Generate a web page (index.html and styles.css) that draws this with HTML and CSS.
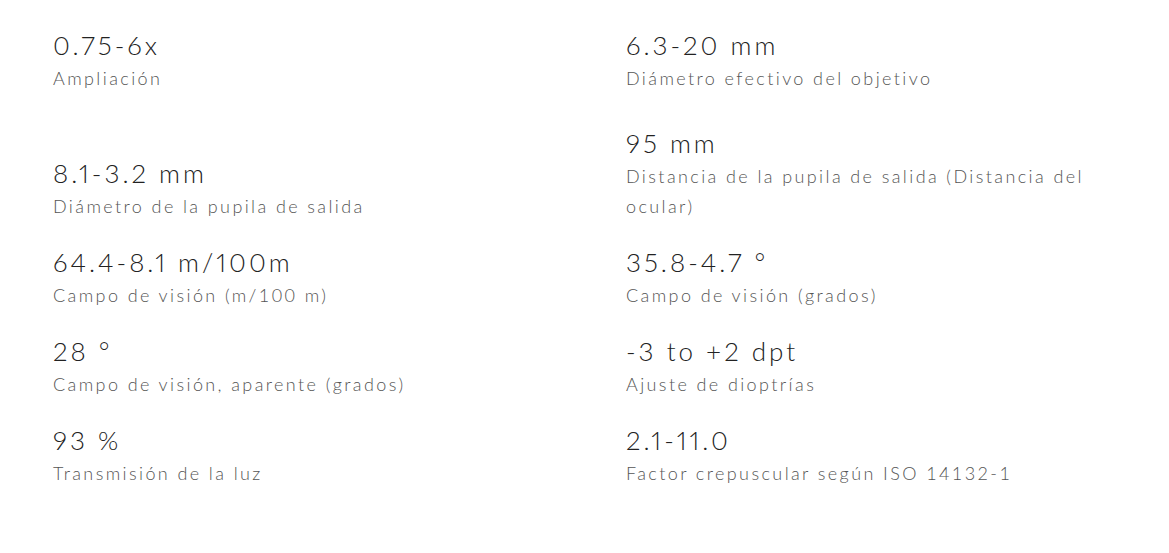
FILE: index.html
```html
<!DOCTYPE html>
<html lang="es">
<head>
<meta charset="utf-8">
<title>Especificaciones</title>
<link rel="stylesheet" href="styles.css">
</head>
<body>
<main class="specs">
  <div class="spec spec--first"><div class="value">0.75-6x</div><div class="label">Ampliación</div></div>
  <div class="spec spec--first"><div class="value">6.3-20 mm</div><div class="label">Diámetro efectivo del objetivo</div></div>
  <div class="spec"><div class="value">8.1-3.2 mm</div><div class="label">Diámetro de la pupila de salida</div></div>
  <div class="spec"><div class="value">95 mm</div><div class="label">Distancia de la pupila de salida (Distancia del ocular)</div></div>
  <div class="spec"><div class="value">64.4-8.1 m/100m</div><div class="label">Campo de visión (m/100 m)</div></div>
  <div class="spec"><div class="value">35.8-4.7 °</div><div class="label">Campo de visión (grados)</div></div>
  <div class="spec"><div class="value">28 °</div><div class="label">Campo de visión, aparente (grados)</div></div>
  <div class="spec"><div class="value">-3 to +2 dpt</div><div class="label">Ajuste de dioptrías</div></div>
  <div class="spec"><div class="value">93 %</div><div class="label">Transmisión de la luz</div></div>
  <div class="spec"><div class="value">2.1-11.0</div><div class="label">Factor crepuscular según ISO 14132-1</div></div>
</main>
</body>
</html>
```
FILE: styles.css
```css
html, body {
  margin: 0;
  padding: 0;
  background: #ffffff;
}

body {
  font-family: "Lato", "Open Sans", sans-serif;
  font-weight: 300;
}

.specs {
  display: grid;
  grid-template-columns: 490px 490px;
  column-gap: 83px;
  row-gap: 23px;
  align-items: end;
  padding: 27px 0 0 53px;
}

.spec {
  display: flex;
  flex-direction: column;
}

.spec--first {
  margin-bottom: 9px;
}

.value {
  font-size: 26px;
  line-height: 36px;
  color: #222222;
  letter-spacing: 3px;
  font-variant-numeric: proportional-nums;
}

.label {
  font-size: 18px;
  line-height: 30px;
  color: #555555;
  letter-spacing: 2.4px;
}
```
